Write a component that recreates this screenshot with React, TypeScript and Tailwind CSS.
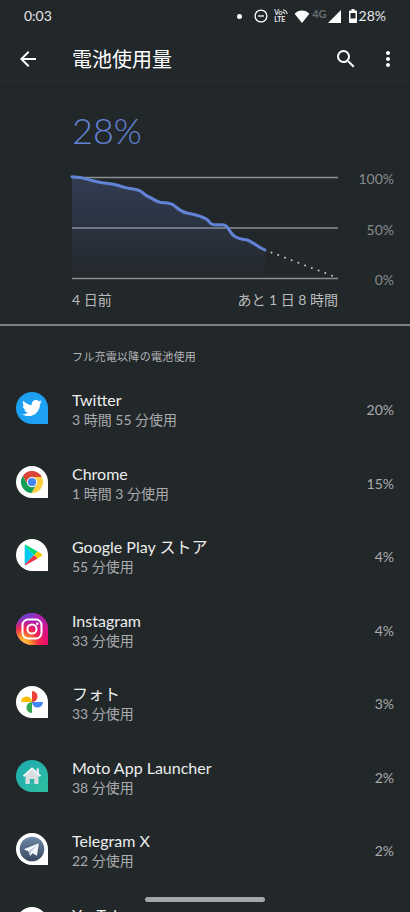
import type { ReactNode } from "react";
import { FaTwitter } from "react-icons/fa";
import { MdArrowBack, MdMoreVert, MdSearch } from "react-icons/md";
import clsx from "clsx";

type AppUsage = {
  name: string;
  usage: string;
  percent: string;
  iconClass: string;
  icon: ReactNode;
};

function ChromeIcon() {
  return (
    <svg viewBox="0 0 32 32" className="size-8" aria-hidden>
      <g transform="translate(16 16)">
        <path d="M-9.23-5.99A11 11 0 0 1 9.8-5H0L-4.33 2.5Z" fill="#db4437" />
        <path d="M9.8-5A11 11 0 0 1-.57 10.99L4.33 2.5L0-5Z" fill="#ffcd40" />
        <path d="M-.57 10.99A11 11 0 0 1-9.23-5.99L-4.33 2.5H4.33Z" fill="#0f9d58" />
        <circle r="5.2" fill="#f1f1f1" />
        <circle r="4.1" fill="#4285f4" />
      </g>
    </svg>
  );
}

function PlayIcon() {
  return (
    <svg viewBox="0 0 32 32" className="size-8" aria-hidden>
      <path d="M8.7 6.6v18.8L18.2 16Z" fill="#00c8f5" />
      <path d="M8.7 6.6c0-.8.7-1 1.3-.7l11.6 6.6L18.2 16Z" fill="#00d977" />
      <path d="M8.7 25.4c0 .8.7 1 1.3.7l11.6-6.6L18.2 16Z" fill="#f2344a" />
      <path d="m21.6 12.5 4 2.5c.9.5.9 1.4 0 2l-4 2.5L18.2 16Z" fill="#ffc900" />
    </svg>
  );
}

function InstagramIcon() {
  return (
    <svg viewBox="0 0 32 32" className="size-8" aria-hidden>
      <defs>
        <linearGradient id="ig-base" x1="0" y1="0" x2="0.6" y2="1">
          <stop offset="0" stopColor="#3f5be0" />
          <stop offset="0.4" stopColor="#a723b4" />
          <stop offset="1" stopColor="#ee0b72" />
        </linearGradient>
        <radialGradient id="ig-glow" cx="0.2" cy="1" r="0.85">
          <stop offset="0" stopColor="#ffd94d" />
          <stop offset="0.3" stopColor="#fd9a2b" />
          <stop offset="0.6" stopColor="#f5303f" stopOpacity="0.9" />
          <stop offset="1" stopColor="#e0126f" stopOpacity="0" />
        </radialGradient>
      </defs>
      <rect width="32" height="32" fill="url(#ig-base)" />
      <rect width="32" height="32" fill="url(#ig-glow)" />
      <g fill="none" stroke="#fff" strokeWidth="2">
        <rect x="6.5" y="6.5" width="19" height="19" rx="5.5" />
        <circle cx="16" cy="16" r="4.6" />
      </g>
      <circle cx="21.3" cy="10.7" r="1.3" fill="#fff" />
    </svg>
  );
}

function PhotosIcon() {
  return (
    <svg viewBox="0 0 32 32" className="size-8" aria-hidden>
      <path d="M16 5a5.5 5.5 0 0 1 0 11Z" fill="#ea4335" />
      <path d="M5 16a5.5 5.5 0 0 1 11 0Z" fill="#fbbc04" />
      <path d="M16 27a5.5 5.5 0 0 1 0-11Z" fill="#34a853" />
      <path d="M27 16a5.5 5.5 0 0 1-11 0Z" fill="#4285f4" />
    </svg>
  );
}

function HomeIcon() {
  return (
    <svg viewBox="0 0 32 32" className="size-8" aria-hidden>
      <path d="M20.5 8.500h2.500v6h-2.500z" fill="#e3e6ea" />
      <path d="M9.500 15.500 16 9.500l6.500 6V24h-4.300v-5h-4.400v5H9.500Z" fill="#d9dde2" />
      <path d="m7.500 16.200 8.500-7.700 8.500 7.700" fill="none" stroke="#f4f5f7" strokeWidth="2" />
    </svg>
  );
}

function TelegramIcon() {
  return (
    <svg viewBox="0 0 32 32" className="size-8" aria-hidden>
      <defs>
        <linearGradient id="tg" x1="0" y1="0" x2="0" y2="1">
          <stop offset="0" stopColor="#6b87a8" />
          <stop offset="1" stopColor="#3b4a5f" />
        </linearGradient>
      </defs>
      <circle cx="16" cy="16" r="12.3" fill="url(#tg)" />
      <path d="M22.8 10.2 7.8 16.3l4.7 2 1.7 4.7 2.3-2.8 4.5 2.5Z" fill="#f4f7fa" />
      <path d="m12.5 18.3 8.5-6.3-6 6.8-.8 4.2Z" fill="#b9c7d6" />
    </svg>
  );
}

function YouTubeIcon() {
  return (
    <svg viewBox="0 0 32 32" className="size-8" aria-hidden>
      <rect x="5" y="9" width="22" height="15" rx="4" fill="#f00" />
      <path d="m14 13 6 3.500-6 3.500Z" fill="#fff" />
    </svg>
  );
}

const apps: AppUsage[] = [
  {
    name: "Twitter",
    usage: "3 時間 55 分使用",
    percent: "20%",
    iconClass: "bg-[#1da1f2]",
    icon: <FaTwitter className="size-5 text-white" aria-hidden />,
  },
  { name: "Chrome", usage: "1 時間 3 分使用", percent: "15%", iconClass: "bg-white", icon: <ChromeIcon /> },
  { name: "Google Play ストア", usage: "55 分使用", percent: "4%", iconClass: "bg-white", icon: <PlayIcon /> },
  { name: "Instagram", usage: "33 分使用", percent: "4%", iconClass: "bg-[#c1279d]", icon: <InstagramIcon /> },
  { name: "フォト", usage: "33 分使用", percent: "3%", iconClass: "bg-white", icon: <PhotosIcon /> },
  {
    name: "Moto App Launcher",
    usage: "38 分使用",
    percent: "2%",
    iconClass: "bg-linear-to-br from-[#1fa9b0] to-[#2fbf9f]",
    icon: <HomeIcon />,
  },
  { name: "Telegram X", usage: "22 分使用", percent: "2%", iconClass: "bg-white", icon: <TelegramIcon /> },
  { name: "YouTube", usage: "", percent: "", iconClass: "bg-white", icon: <YouTubeIcon /> },
];

function StatusBar() {
  return (
    <div className="flex h-8 shrink-0 items-center justify-between px-6 text-sm text-[#e4e6e7]">
      <span>0:03</span>
      <div className="flex items-center">
        <span className="mr-3 size-[5px] rounded-full bg-white" />
        <svg viewBox="0 0 14 14" className="mr-1.5 size-[14px]" fill="none" stroke="#fff" strokeWidth="1.3" aria-hidden>
          <circle cx="7" cy="7" r="5.9" />
          <path d="M4 7h6" />
        </svg>
        <span className="mr-1 flex w-4 flex-col text-[7px] leading-[7px] font-bold">
          <span className="flex h-[7px]">
            Vo
            <svg viewBox="0 0 6 6" className="size-[6px] shrink-0" fill="none" stroke="#fff" aria-hidden>
              <path d="M1 .8Q4.800 1 5.300 5M.500 3Q2.800 3.200 3 5" />
            </svg>
          </span>
          <span className="h-[7px]">LTE</span>
        </span>
        <svg viewBox="0 0 16 13" className="mr-0.5 h-[13px] w-4" fill="#fff" aria-hidden>
          <path d="M8 13 .6 3.8C2.5 1.7 5 .5 8 .5s5.500 1.200 7.400 3.300Z" />
        </svg>
        <span className="mr-px -mt-1 text-[11px] leading-4 font-bold text-[#666b6e]">4G</span>
        <svg viewBox="0 0 13 13" className="mr-2 size-[13px]" fill="#fff" aria-hidden>
          <path d="M13 0v13H0Z" />
        </svg>
        <svg viewBox="0 0 8 14" className="mr-0.5 h-[14px] w-2" aria-hidden>
          <path
            fillRule="evenodd"
            fill="#fff"
            d="M2.5 0h3v1.400H7.200q.8 0 .8.800v11q0 .8-.8.800H.8Q0 14 0 13.200v-11q0-.8.800-.8H2.500ZM1.500 4v5.500h5V4Z"
          />
        </svg>
        <span>28%</span>
      </div>
    </div>
  );
}

function AppBar() {
  return (
    <header className="flex h-14 shrink-0 items-center border-b border-[#1e2226] pr-2.5 pb-0.5 pl-4 text-white">
      <button type="button" aria-label="戻る">
        <MdArrowBack className="size-6" />
      </button>
      <h1 className="ml-8 flex-1 text-xl">電池使用量</h1>
      <button type="button" aria-label="検索" className="mr-[18px]">
        <MdSearch className="size-6" />
      </button>
      <button type="button" aria-label="その他">
        <MdMoreVert className="size-6" />
      </button>
    </header>
  );
}

const levelCurve =
  "M0 .8C9 .8 13 2.5 20 4.5S31 7.3 38 7.8S48 10.5 55 12S64 12.8 68 14.8S72 19 77 21S84 26 89 26.5S98 26 102 29.5S110 36 115 37S131 40.5 135 43.5S137 48.5 142 48.7H150C156 49 156 53 160 58S168 62.5 174 63.8S185 70.5 193 74";

function BatteryChart() {
  return (
    <section className="pt-2.5 pr-4 pb-3.5 pl-[72px]">
      <p className="text-4xl leading-[64px] font-light text-[#6283d5]">28%</p>
      <div className="mt-[7px] flex">
        <svg
          viewBox="0 0 266 104"
          preserveAspectRatio="none"
          className="mt-[7px] mb-2.5 h-[104px] min-w-0 flex-1 overflow-visible"
          fill="none"
          role="img"
          aria-label="電池残量"
        >
          <defs>
            <linearGradient id="level" x1="0" y1="0" x2="0" y2="104" gradientUnits="userSpaceOnUse">
              <stop offset="0" stopColor="#6283d5" stopOpacity="0.24" />
              <stop offset="1" stopColor="#6283d5" stopOpacity="0.01" />
            </linearGradient>
          </defs>
          <path d="M0 1.5H266M0 52H266M0 102.5H266" stroke="#8b8e90" strokeWidth="1.5" />
          <path d={`${levelCurve}V102H0Z`} fill="url(#level)" />
          <path d={levelCurve} stroke="#6283d5" strokeWidth="3" strokeLinecap="round" />
          <path
            d="M199.5 76.5 266 102"
            stroke="#c4c7c8"
            strokeWidth="2"
            strokeLinecap="round"
            strokeDasharray="0 7.2"
          />
        </svg>
        <div className="flex w-14 flex-col justify-between text-right text-sm leading-5 text-[#878b8d]">
          <span>100%</span>
          <span>50%</span>
          <span>0%</span>
        </div>
      </div>
      <div className="mr-14 flex justify-between text-sm leading-5 text-[#b9bbbc]">
        <span>4 日前</span>
        <span>あと 1 日 8 時間</span>
      </div>
    </section>
  );
}

function AppRow({ app }: { app: AppUsage }) {
  return (
    <li className="flex h-[74px] items-center px-4 even:h-[73px]">
      <span
        className={clsx(
          "mb-1 flex size-8 shrink-0 items-center justify-center overflow-hidden rounded-full rounded-br-sm",
          app.iconClass
        )}
      >
        {app.icon}
      </span>
      <div className="ml-6 min-w-0 flex-1">
        <p className="truncate text-base leading-5 text-[#eceded]">{app.name}</p>
        <p className="min-h-5 truncate text-sm leading-5 text-[#a9abad]">{app.usage}</p>
      </div>
      <span className="text-sm text-[#a9abad]">{app.percent}</span>
    </li>
  );
}

export default function App() {
  return (
    <div
      lang="ja"
      className="relative flex h-screen flex-col overflow-hidden bg-[#22272a] font-['Lato','Noto_Sans_CJK_JP',sans-serif]"
    >
      <StatusBar />
      <AppBar />
      <main className="min-h-0 flex-1 overflow-y-auto [scrollbar-width:none]">
        <BatteryChart />
        <section className="border-t-2 border-[#7d8183]">
          <h2 className="pt-[21px] pb-1.5 pl-[72px] text-[11px] leading-5 tracking-wide text-[#b4b6b8]">
            フル充電以降の電池使用
          </h2>
          <ul>
            {apps.map((app) => (
              <AppRow key={app.name} app={app} />
            ))}
          </ul>
        </section>
      </main>
      {/* gesture bar */}
      <div className="absolute bottom-2.5 left-1/2 h-[5px] w-[120px] -translate-x-1/2 rounded-full bg-[#a5a6a7]" />
    </div>
  );
}
